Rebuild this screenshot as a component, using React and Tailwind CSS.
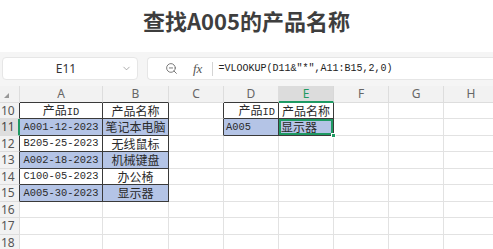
import { ChevronDown, ZoomOut } from 'lucide-react';

const cols = [
  { key: 'A', w: 'w-[83px]' },
  { key: 'B', w: 'w-[66px]' },
  { key: 'C', w: 'w-[55px]' },
  { key: 'D', w: 'w-[55px]' },
  { key: 'E', w: 'w-[55px]' },
  { key: 'F', w: 'w-[55px]' },
  { key: 'G', w: 'w-[55px]' },
  { key: 'H', w: 'w-[55px]' },
];

const blue = 'bg-[#b4c4e6]';

// cells: [text, align, fill, latin, suffix]
const data = {
  10: { A: ['产品', 'c', 0, 0, 'ID'], B: ['产品名称', 'c'], D: ['产品', 'r', 0, 0, 'ID'], E: ['产品名称', 'c'] },
  11: { A: ['A001-12-2023', 'c', 1, 1], B: ['笔记本电脑', 'c', 1], D: ['A005', 'l', 1, 1], E: ['显示器', 'l', 1] },
  12: { A: ['B205-25-2023', 'c', 0, 1], B: ['无线鼠标', 'c'] },
  13: { A: ['A002-18-2023', 'c', 1, 1], B: ['机械键盘', 'c', 1] },
  14: { A: ['C100-05-2023', 'c', 0, 1], B: ['办公椅', 'c'] },
  15: { A: ['A005-30-2023', 'c', 1, 1], B: ['显示器', 'c', 1] },
};

const rows = [10, 11, 12, 13, 14, 15, 16, 17, 18];
const heights = {
  10: 'h-[16px]', 11: 'h-[17px]', 12: 'h-[16px]', 13: 'h-[17px]', 14: 'h-[16px]',
  15: 'h-[17px]', 16: 'h-[16px]', 17: 'h-[17px]', 18: 'h-[16px]',
};

const mono = "font-['Liberation_Mono','Noto_Sans_CJK_SC',monospace] text-[10.4px] text-[#2a2a2a] leading-none";
const cjk = "font-['Noto_Sans_CJK_SC',sans-serif] text-[12px] text-[#2a2a2a] leading-none";

const inTable = (r, c) => {
  if (r >= 10 && r <= 15 && (c === 'A' || c === 'B')) return true;
  if (r >= 10 && r <= 11 && (c === 'D' || c === 'E')) return true;
  return false;
};
const nextCol = (c) => {
  const i = cols.findIndex((x) => x.key === c);
  return cols[i + 1] ? cols[i + 1].key : null;
};

const Cell = ({ r, col }) => {
  const cell = data[r] && data[r][col.key];
  const darkR = inTable(r, col.key) || inTable(r, nextCol(col.key));
  const darkB = inTable(r, col.key) || inTable(r + 1, col.key);
  const selected = r === 11 && col.key === 'E';
  const align = cell ? (cell[1] === 'c' ? 'justify-center' : cell[1] === 'r' ? 'justify-end pr-[3px]' : 'justify-start pl-[2px]') : '';
  return (
    <div
      className={`relative shrink-0 flex items-center border-r border-b ${col.w} ${darkR ? 'border-r-[#3a3a3a]' : 'border-r-[#e2e2e2]'} ${darkB ? 'border-b-[#3a3a3a]' : 'border-b-[#e2e2e2]'} ${cell && cell[2] ? blue : 'bg-white'} ${align} ${selected ? 'shadow-[inset_0_0_0_2px_#1f9a63]' : ''}`}
    >
      {cell && (
        <span className="flex items-baseline">
          <span className={cell[3] ? mono : cjk}>{cell[0]}</span>
          {cell[4] && <span className="font-['Liberation_Mono',monospace] text-[10.4px] text-[#2a2a2a] leading-none">{cell[4]}</span>}
        </span>
      )}
      {selected && <span className="absolute -right-[3px] -bottom-[3px] w-[5px] h-[5px] bg-[#1f9a63] border border-white z-10" />}
    </div>
  );
};

export default function App() {
  return (
    <div className="w-[493px] h-[249px] overflow-hidden bg-white font-['Noto_Sans',sans-serif]">
      <div className="h-[52px] flex items-start justify-center pt-[5px]">
        <h1 className="font-['Noto_Sans_CJK_SC',sans-serif] font-bold text-[22px] text-[#3e3e3e] leading-[30px]">查找A005的产品名称</h1>
      </div>

      <div className="h-[34px] bg-[#f5f5f5] flex items-start pt-[5px] gap-[9px] pl-[2px]">
        <div className="w-[136px] h-[23px] bg-white rounded-[4px] border border-[#e6e6e6] flex items-center">
          <span className="flex-1 text-center text-[12px] text-[#333] pl-[8px]">E11</span>
          <ChevronDown className="w-[11px] h-[11px] text-[#888] mr-[5px]" strokeWidth={1.5} />
        </div>
        <div className="flex-1 h-[23px] bg-white rounded-l-[4px] border border-r-0 border-[#e6e6e6] flex items-center">
          <ZoomOut className="w-[13px] h-[13px] text-[#666] ml-[17px]" strokeWidth={1.6} />
          <span className="ml-[15px] font-['Liberation_Serif',serif] italic text-[13px] text-[#555]">fx</span>
          <span className="ml-[10px] w-px h-[14px] bg-[#d4d4d4]" />
          <span className="ml-[5px] font-['Liberation_Mono','Noto_Sans_CJK_SC',monospace] text-[10px] text-[#222]">=VLOOKUP(D11&"*",A11:B15,2,0)</span>
        </div>
      </div>

      <div className="flex h-[17px] bg-[#f2f2f2]">
        <div className="w-[20px] shrink-0 flex items-center pl-[4px] border-r border-b border-[#dddddd]">
          <span className="w-0 h-0 border-l-[5px] border-l-transparent border-b-[5px] border-b-[#999] mt-[2px]" />
        </div>
        {cols.map((c) => (
          <div
            key={c.key}
            className={`${c.w} shrink-0 flex items-center justify-center border-r text-[12px] leading-none ${c.key === 'E' ? 'bg-[#dcdcdc] text-[#1f9a63] border-b-2 border-b-[#1f9a63] border-r-[#d8d8d8]' : `text-[#666] border-b border-r-[#dddddd] ${inTable(10, c.key) ? 'border-b-[#3a3a3a]' : 'border-b-[#dddddd]'}`}`}
          >
            {c.key}
          </div>
        ))}
      </div>

      {rows.map((r) => (
        <div key={r} className={`flex ${heights[r]}`}>
          <div
            className={`w-[20px] shrink-0 flex items-center pl-[1px] border-b border-b-[#dddddd] text-[12px] leading-none ${r === 11 ? 'bg-[#dedede] text-[#444] border-r-2 border-r-[#1f9a63]' : 'bg-[#f2f2f2] text-[#555] border-r'} ${r !== 11 ? (inTable(r, 'A') ? 'border-r-[#3a3a3a]' : 'border-r-[#dddddd]') : ''}`}
          >
            {r}
          </div>
          {cols.map((c) => (
            <Cell key={c.key} r={r} col={c} />
          ))}
        </div>
      ))}
    </div>
  );
}
